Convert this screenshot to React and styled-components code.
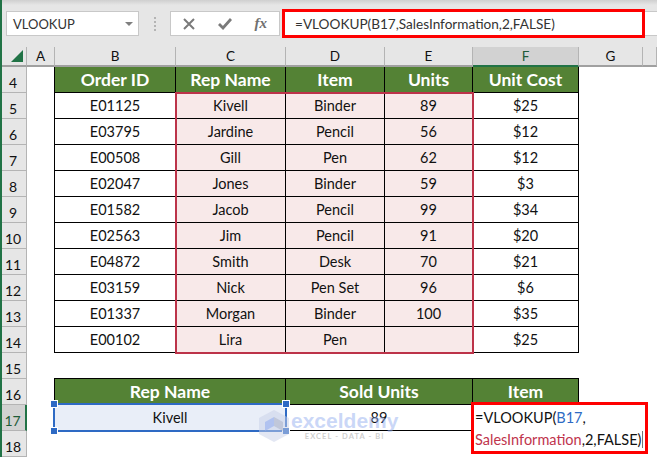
import React from 'react';
import styled, { createGlobalStyle } from 'styled-components';

const orders = [
  ['E01125', 'Kivell', 'Binder', '89', '$25'],
  ['E03795', 'Jardine', 'Pencil', '56', '$12'],
  ['E00508', 'Gill', 'Pen', '62', '$12'],
  ['E02047', 'Jones', 'Binder', '59', '$3'],
  ['E01582', 'Jacob', 'Pencil', '99', '$34'],
  ['E02563', 'Jim', 'Pencil', '91', '$20'],
  ['E04872', 'Smith', 'Desk', '70', '$21'],
  ['E03159', 'Nick', 'Pen Set', '96', '$6'],
  ['E01337', 'Morgan', 'Binder', '100', '$35'],
  ['E00102', 'Lira', 'Pen', '', '$25'],
];

const columns = ['A', 'B', 'C', 'D', 'E', 'F', 'G'];
const columnTemplate = '27px 28px 121px 110px 99px 88px 106px 64px 14px';

const GlobalStyle = createGlobalStyle`
  body {
    margin: 0;
    background: #fff;
    font-family: 'Lato', 'Liberation Sans', sans-serif;
    color: #111;
  }
`;

const Page = styled.div`
  position: relative;
  width: 657px;
  height: 457px;
  overflow: hidden;
  border-left: 2px solid #217346;
  box-sizing: border-box;
`;

const Shift = styled.div`
  margin-left: -2px;
`;

const FormulaBar = styled.div`
  height: 47px;
  box-sizing: border-box;
  padding: 11px 0 11px 6px;
  background: linear-gradient(#cfcfcf 0, #e6e6e6 5px);
  display: flex;
  align-items: stretch;
`;

const NameBox = styled.div`
  width: 133px;
  box-sizing: border-box;
  background: #fff;
  border: 1px solid #c8c8c8;
  display: flex;
  align-items: center;
  justify-content: space-between;
  padding: 0 5px 0 6px;
  font-size: 13px;
  color: #333;
`;

const Caret = styled.span`
  width: 0;
  height: 0;
  border-left: 4px solid transparent;
  border-right: 4px solid transparent;
  border-top: 4px solid #7f7f7f;
`;

const Grip = styled.div`
  width: 31px;
  display: flex;
  flex-direction: column;
  align-items: center;
  justify-content: center;
  gap: 2px;
  span {
    width: 2px;
    height: 2px;
    background: #b4b4b4;
  }
`;

const ActionBox = styled.div`
  width: 110px;
  box-sizing: border-box;
  background: #fff;
  border: 1px solid #c8c8c8;
  display: flex;
  align-items: center;
  justify-content: space-between;
  padding: 0 12px 0 12px;
`;

const Fx = styled.span`
  font-family: 'Liberation Serif', serif;
  font-style: italic;
  font-weight: 700;
  font-size: 15px;
  color: #707070;
`;

const FormulaInput = styled.div`
  flex: 1;
  margin-left: 2px;
  background: #fff;
  position: relative;
  display: flex;
  align-items: center;
  padding-left: 13px;
  font-size: 13.6px;
  color: #333;
  border-top: 1px solid #c8c8c8;
  border-bottom: 1px solid #c8c8c8;
`;

const RedFrame = styled.div`
  position: absolute;
  left: 0;
  right: 12px;
  top: -3px;
  bottom: -3px;
  border: 3px solid #fe0000;
`;

const Sheet = styled.div`
  display: grid;
  grid-template-columns: ${columnTemplate};
`;

const HeadCell = styled.div`
  height: 20px;
  box-sizing: border-box;
  background: ${p => (p.$active ? '#d2d2d2' : '#e6e6e6')};
  border-right: 1px solid #b4b4b4;
  border-bottom: 2px solid ${p => (p.$active ? '#217346' : '#a0a0a0')};
  display: flex;
  align-items: center;
  justify-content: center;
  font-size: 13.5px;
  color: ${p => (p.$active ? '#1f5c38' : '#111')};
  position: relative;
`;

const Corner = styled.span`
  position: absolute;
  right: 3px;
  bottom: 3px;
  width: 0;
  height: 0;
  border-left: 12px solid transparent;
  border-bottom: 12px solid #217346;
`;

const RowLabel = styled.div`
  height: 26px;
  box-sizing: border-box;
  background: ${p => (p.$active ? '#d2d2d2' : '#e6e6e6')};
  border-bottom: 1px solid #b4b4b4;
  border-right: ${p => (p.$active ? '2px solid #217346' : '1px solid #b4b4b4')};
  display: flex;
  align-items: flex-end;
  justify-content: center;
  padding-bottom: 1px;
  font-size: 14px;
  color: ${p => (p.$active ? '#1f5c38' : '#111')};
`;

const Blank = styled.div`
  height: 26px;
  background: #fff;
  ${p => p.$span && `grid-column: span ${p.$span};`}
`;

const Cell = styled.div`
  height: 26px;
  box-sizing: border-box;
  display: flex;
  align-items: center;
  justify-content: center;
  font-size: 14.5px;
  color: #111;
  background: ${p => (p.$pink ? '#f8e9e9' : '#fff')};
  border-right: 1px solid #000;
  border-bottom: 1px solid #000;
  ${p => p.$first && 'border-left: 1px solid #000; margin-left: -1px;'}
`;

const HeaderCell = styled(Cell)`
  background: #548235;
  color: #fff;
  font-weight: 700;
  font-size: 17.5px;
  ${p => p.$top && 'box-shadow: 0 -1px 0 #000;'}
`;

const WideCell = styled(Cell)`
  grid-column: span 2;
`;

const WideHeader = styled(HeaderCell)`
  grid-column: span 2;
`;

const RangeBox = styled.div`
  position: absolute;
  left: 173px;
  top: 92px;
  width: 299px;
  height: 262px;
  box-sizing: border-box;
  border: 2px solid #bc3349;
  pointer-events: none;
`;

const Selection = styled.div`
  position: absolute;
  left: 51px;
  top: 403px;
  width: 234px;
  height: 29px;
  box-sizing: border-box;
  background: #e9eef8;
  border: 2px solid #2e6ac4;
  display: flex;
  align-items: center;
  justify-content: center;
  font-size: 14.5px;
  color: #111;
`;

const Handle = styled.span`
  position: absolute;
  width: 6px;
  height: 6px;
  box-sizing: border-box;
  background: #2e6ac4;
  outline: 1px solid #fff;
  ${p => (p.$left ? 'left: -4px;' : 'right: -4px;')}
  ${p => (p.$top ? 'top: -4px;' : 'bottom: -4px;')}
`;

const FormulaPopup = styled.div`
  position: absolute;
  left: 469px;
  top: 402px;
  width: 177px;
  height: 52px;
  box-sizing: border-box;
  background: #fff;
  border: 3px solid #fe0000;
  padding: 2px 0 0 1px;
  font-size: 14.5px;
  line-height: 22px;
  color: #111;
  white-space: nowrap;
`;

const Ref = styled.span`
  color: ${p => p.$color};
`;

const TextCaret = styled.span`
  display: inline-block;
  width: 1px;
  height: 17px;
  margin-left: 1px;
  vertical-align: -3px;
  background: #777;
`;

const Watermark = styled.div`
  position: absolute;
  left: 255px;
  top: 409px;
  display: flex;
  gap: 0;
  pointer-events: none;
`;

const MarkText = styled.div`
  display: flex;
  flex-direction: column;
  align-items: center;
`;

const MarkName = styled.span`
  font-family: 'Liberation Sans', sans-serif;
  font-size: 21px;
  line-height: 23px;
  font-weight: 700;
  color: rgba(150, 175, 240, 0.5);
`;

const MarkTag = styled.span`
  font-size: 7.5px;
  line-height: 9px;
  letter-spacing: 1.1px;
  font-weight: 700;
  color: #cfcfcf;
`;

const App = () => (
  <>
    <GlobalStyle />
    <Page>
      <Shift>
        <FormulaBar>
          <NameBox>
            VLOOKUP
            <Caret />
          </NameBox>
          <Grip>
            <span />
            <span />
            <span />
            <span />
          </Grip>
          <ActionBox>
            <svg width="12" height="12" viewBox="0 0 12 12">
              <path d="M1 1l10 10M11 1L1 11" stroke="#7a7a7a" strokeWidth="2" fill="none" />
            </svg>
            <svg width="14" height="12" viewBox="0 0 14 12">
              <path d="M1 6l4 4 8-9" stroke="#7a7a7a" strokeWidth="2.8" fill="none" />
            </svg>
            <Fx>fx</Fx>
          </ActionBox>
          <FormulaInput>
            =VLOOKUP(B17,SalesInformation,2,FALSE)
            <RedFrame />
          </FormulaInput>
        </FormulaBar>

        <Sheet>
          <HeadCell>
            <Corner />
          </HeadCell>
          {columns.map(c => (
            <HeadCell key={c} $active={c === 'F'}>
              {c}
            </HeadCell>
          ))}
          <HeadCell />

          <RowLabel>4</RowLabel>
          <Blank />
          <HeaderCell $first>Order ID</HeaderCell>
          <HeaderCell>Rep Name</HeaderCell>
          <HeaderCell>Item</HeaderCell>
          <HeaderCell>Units</HeaderCell>
          <HeaderCell>Unit Cost</HeaderCell>
          <Blank $span={2} />

          {orders.map((row, i) => (
            <React.Fragment key={row[0]}>
              <RowLabel>{i + 5}</RowLabel>
              <Blank />
              <Cell $first>{row[0]}</Cell>
              <Cell $pink>{row[1]}</Cell>
              <Cell $pink>{row[2]}</Cell>
              <Cell $pink>{row[3]}</Cell>
              <Cell>{row[4]}</Cell>
              <Blank $span={2} />
            </React.Fragment>
          ))}

          <RowLabel>15</RowLabel>
          <Blank $span={8} />

          <RowLabel>16</RowLabel>
          <Blank />
          <WideHeader $first $top>Rep Name</WideHeader>
          <WideHeader $top>Sold Units</WideHeader>
          <HeaderCell $top>Item</HeaderCell>
          <Blank $span={2} />

          <RowLabel $active>17</RowLabel>
          <Blank />
          <WideCell $first />
          <WideCell>89</WideCell>
          <Cell />
          <Blank $span={2} />

          <RowLabel>18</RowLabel>
          <Blank $span={8} />
        </Sheet>
      </Shift>

      <RangeBox />
      <Selection>
        Kivell
        <Handle $left $top />
        <Handle $top />
        <Handle $left />
        <Handle />
      </Selection>
      <FormulaPopup>
        =VLOOKUP(<Ref $color="#2e6ac4">B17</Ref>,
        <br />
        <Ref $color="#c0344d">SalesInformation</Ref>,2,FALSE)
        <TextCaret />
      </FormulaPopup>
      <Watermark>
        <svg width="34" height="34" viewBox="0 0 34 34">
          <path d="M17 1l15 8v16l-15 8-15-8V9z" fill="#c8d0e8" fillOpacity="0.5" />
          <path d="M17 8l9 5v9l-9-5z" fill="#a8b0c4" fillOpacity="0.5" />
          <path d="M17 8l-9 5v9l9-5z" fill="#96aff0" fillOpacity="0.6" />
        </svg>
        <MarkText>
          <MarkName>exceldemy</MarkName>
          <MarkTag>EXCEL - DATA - BI</MarkTag>
        </MarkText>
      </Watermark>
    </Page>
  </>
);

export default App;
